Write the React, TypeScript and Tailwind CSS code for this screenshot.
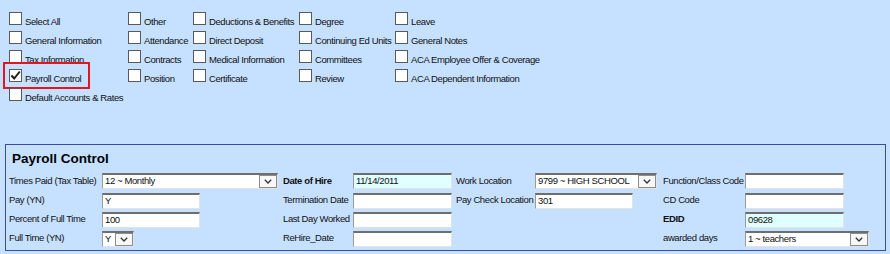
import type { ReactNode } from "react";

type Box = { label: string; checked?: boolean; marked?: boolean };

const columns: { width: string; items: Box[] }[] = [
    {
        width: "w-[119px]",
        items: [
            { label: "Select All" },
            { label: "General Information" },
            { label: "Tax Information" },
            { label: "Payroll Control", checked: true, marked: true },
            { label: "Default Accounts & Rates" },
        ],
    },
    {
        width: "w-[65px]",
        items: [{ label: "Other" }, { label: "Attendance" }, { label: "Contracts" }, { label: "Position" }],
    },
    {
        width: "w-[106px]",
        items: [
            { label: "Deductions & Benefits" },
            { label: "Direct Deposit" },
            { label: "Medical Information" },
            { label: "Certificate" },
        ],
    },
    {
        width: "w-[96px]",
        items: [{ label: "Degree" }, { label: "Continuing Ed Units" }, { label: "Committees" }, { label: "Review" }],
    },
    {
        width: "w-[200px]",
        items: [
            { label: "Leave" },
            { label: "General Notes" },
            { label: "ACA Employee Offer & Coverage" },
            { label: "ACA Dependent Information" },
        ],
    },
];

function CheckRow({ label, checked, marked }: Box) {
    return (
        <div className="relative flex h-[19px] items-start">
            {marked && (
                <span className="absolute left-[-6px] top-[-7px] h-[27px] w-[87px] border-2 border-[#e3161f]" />
            )}
            <span className="flex h-[13px] w-[13px] shrink-0 items-center justify-center border border-[#595959] bg-white">
                {checked && (
                    <svg width="11" height="11" viewBox="0 0 11 11">
                        <path d="M1.5 5.5 L4.2 8.5 L9.8 1.5" fill="none" stroke="#1c1c1c" strokeWidth="2" />
                    </svg>
                )}
            </span>
            <span className="ml-[3px] mt-[3px] whitespace-nowrap leading-[13px]">{label}</span>
        </div>
    );
}

function Chevron() {
    return (
        <svg width="8" height="5" viewBox="0 0 8 5">
            <path d="M0.8 0.8 L4 4 L7.2 0.8" fill="none" stroke="#333" strokeWidth="1.3" />
        </svg>
    );
}

function TextBox({ width, value, tint }: { width: string; value?: string; tint?: boolean }) {
    return (
        <div
            className={`${width} h-[16px] border-b border-l border-r border-t-2 border-b-[#e3e3e3] border-l-[#9a9a9a] border-r-[#e3e3e3] border-t-[#6e6e6e] pl-[2px] leading-[12px] ${tint ? "bg-[#e0ffff]" : "bg-white"}`}
        >
            {value}
        </div>
    );
}

function Select({ width, value }: { width: string; value: string }) {
    return (
        <div
            className={`${width} flex h-[16px] items-stretch border-b border-l border-r border-t-2 border-b-[#e3e3e3] border-l-[#9a9a9a] border-r-[#e3e3e3] border-t-[#6e6e6e] bg-white`}
        >
            <span className="flex-1 overflow-hidden whitespace-nowrap pl-[2px] leading-[12px]">{value}</span>
            <span className="flex w-[18px] items-center justify-center border border-[#8c8c8c] bg-[#f7f7f7]">
                <Chevron />
            </span>
        </div>
    );
}

function Cell({ children, bold }: { children?: ReactNode; bold?: boolean }) {
    return (
        <div className={`flex items-center whitespace-nowrap ${bold ? "font-bold" : ""}`}>{children}</div>
    );
}

export default function App() {
    return (
        <div className="flex h-[254px] w-[890px] flex-col bg-[#c6e0ff] font-['Liberation_Sans',sans-serif] text-[9.5px] tracking-[-0.4px] text-[#111]">
            <section className="flex h-[144px] pl-[9px] pt-[12px]">
                {columns.map((col, i) => (
                    <div key={i} className={`flex flex-col ${col.width}`}>
                        {col.items.map((item) => (
                            <CheckRow key={item.label} {...item} />
                        ))}
                    </div>
                ))}
            </section>

            <section className="ml-[5px] h-[107px] w-[881px] border border-[#3c4ca2] pl-[3px]">
                <h2 className="ml-[3px] pt-[2px] text-[13.5px] font-bold leading-[24px] tracking-normal text-black">
                    Payroll Control
                </h2>
                <div className="grid grid-cols-[93px_181px_70px_103px_79px_128px_82px_1fr] grid-rows-[20px_19px_19px_19px]">
                    <Cell>Times Paid (Tax Table)</Cell>
                    <Cell><Select width="w-[176px]" value="12 ~ Monthly" /></Cell>
                    <Cell bold>Date of Hire</Cell>
                    <Cell><TextBox width="w-[99px]" value="11/14/2011" tint /></Cell>
                    <Cell>Work Location</Cell>
                    <Cell><Select width="w-[122px]" value="9799 ~ HIGH SCHOOL" /></Cell>
                    <Cell>Function/Class Code</Cell>
                    <Cell><TextBox width="w-[99px]" /></Cell>

                    <Cell>Pay (YN)</Cell>
                    <Cell><TextBox width="w-[98px]" value="Y" /></Cell>
                    <Cell>Termination Date</Cell>
                    <Cell><TextBox width="w-[99px]" /></Cell>
                    <Cell>Pay Check Location</Cell>
                    <Cell><TextBox width="w-[98px]" value="301" /></Cell>
                    <Cell>CD Code</Cell>
                    <Cell><TextBox width="w-[99px]" /></Cell>

                    <Cell>Percent of Full Time</Cell>
                    <Cell><TextBox width="w-[98px]" value="100" /></Cell>
                    <Cell>Last Day Worked</Cell>
                    <Cell><TextBox width="w-[99px]" /></Cell>
                    <Cell />
                    <Cell />
                    <Cell bold>EDID</Cell>
                    <Cell><TextBox width="w-[99px]" value="09628" tint /></Cell>

                    <Cell>Full Time (YN)</Cell>
                    <Cell><Select width="w-[32px]" value="Y" /></Cell>
                    <Cell>ReHire_Date</Cell>
                    <Cell><TextBox width="w-[99px]" /></Cell>
                    <Cell />
                    <Cell />
                    <Cell>awarded days</Cell>
                    <Cell><Select width="w-[124px]" value="1 ~ teachers" /></Cell>
                </div>
            </section>
        </div>
    );
}
